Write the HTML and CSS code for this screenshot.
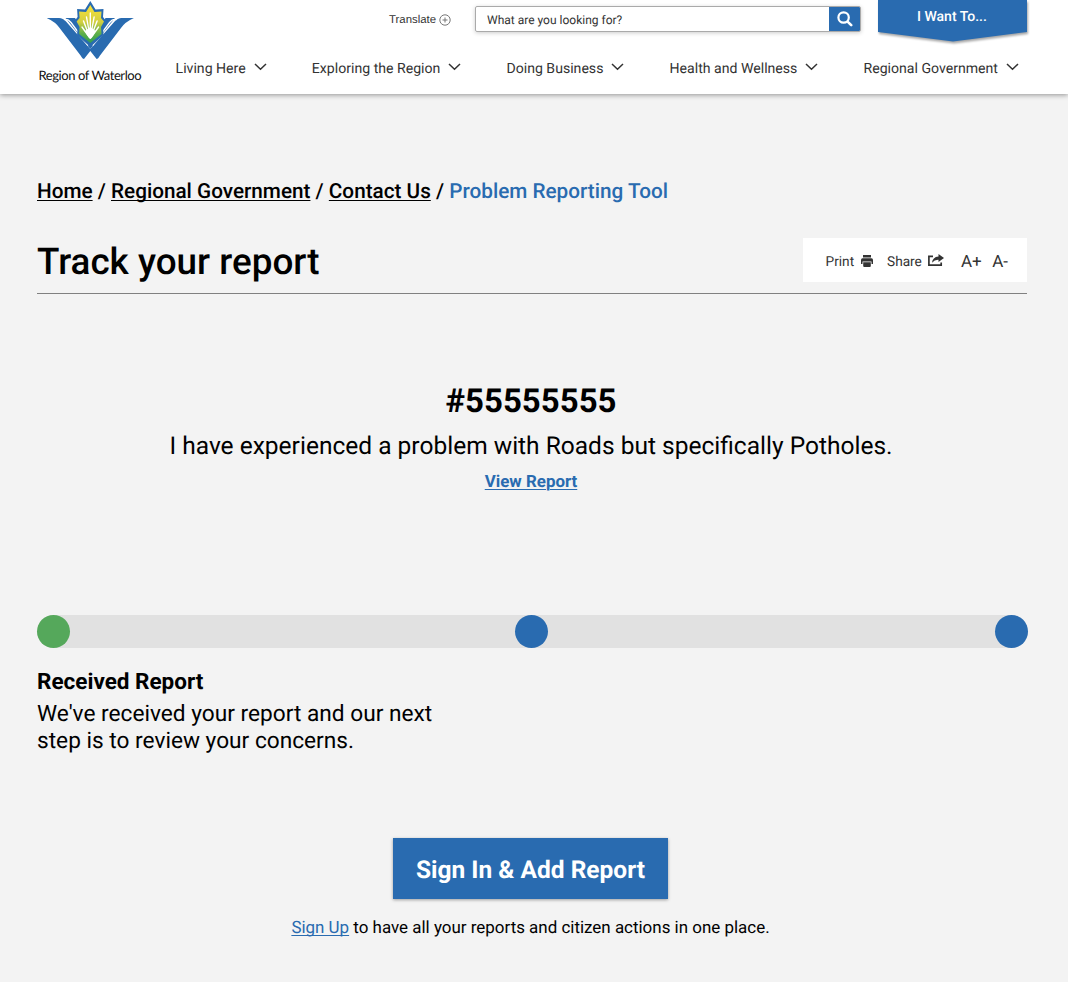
FILE: index.html
```html
<!DOCTYPE html>
<html lang="en">
<head>
<meta charset="utf-8">
<title>Track your report</title>
<link rel="stylesheet" href="styles.css">
</head>
<body>
<header class="header">
  <a class="brand">
    <svg class="logo" width="88" height="60" viewBox="0 0 88 60">
      <defs><linearGradient id="leaf" x1="0" y1="0" x2="0" y2="1"><stop offset="0" stop-color="#f8e03a"/><stop offset=".45" stop-color="#d2cf40"/><stop offset=".75" stop-color="#5eae4a"/><stop offset="1" stop-color="#2f9e4f"/></linearGradient></defs>
      <path fill="#296bb0" d="M.7 17H13Q17 17 20 20.500L44.300 48L68.600 20.500Q71.600 17 75.600 17H87.900Q79 21 75 27L54 54.500Q52 58 50.600 58L44.300 50L38 58Q36.600 58 34.600 54.500L13.600 27Q9.600 21 .7 17Z"/>
      <path fill="#296bb0" d="M19.500 17H29L44.300 38L59.600 17H69L44.300 48Z"/>
      <path fill="none" stroke="#fff" stroke-width="1.300" d="M18 18.500Q22 17.500 25 21.500L42 44.500M70.600 18.500Q66.600 17.500 63.600 21.500L46.600 44.500"/>
      <path fill="#296bb0" d="M44.300 0L49.500 8.500L57.500 8L57 16L60.500 20.500L57 26L57.500 34L44.300 46L31.100 34L31.600 26L28.100 20.500L31.600 16L31.100 8L39 8.500Z"/>
      <path fill="url(#leaf)" d="M44.300 4L48.500 11L55.500 10.500L55 17L58 20.500L55 26L55.500 33L44.300 42L33.100 33L33.600 26L30.600 20.500L33.600 17L33.100 10.500L40 11Z"/>
      <path fill="none" stroke="#fff" stroke-width="1.400" stroke-linecap="round" d="M44.300 37V12M44.300 37L40.500 16M44.300 37L48.100 16M44 37L37.500 20M44.600 37L51.100 20M43.500 36.500L36 26M45.100 36.500L52.600 26"/>
      <path fill="#fff" d="M39 30L44.300 26L49.600 30L47.500 34L44.300 38L41.100 34Z"/>
    </svg>
    <span class="brand-name">Region of Waterloo</span>
  </a>
  <div class="header-main">
    <div class="tools">
      <span class="translate">Translate
        <svg width="12" height="12" viewBox="0 0 12 12" fill="none" stroke="#777"><circle cx="6" cy="6" r="5.200"/><path d="M6 3.500V8.500M3.500 6H8.500"/></svg>
      </span>
      <div class="search">
        <span class="search-text">What are you looking for?</span>
        <span class="search-button"><svg width="16" height="16" viewBox="0 0 16 16" fill="none" stroke="#fff"><circle cx="6.600" cy="6.500" r="5.200" stroke-width="2.200"/><path stroke-width="2.600" stroke-linecap="round" d="M10.800 10.800L14.200 14.200"/></svg></span>
      </div>
      <div class="want">
        <svg class="want-shape" width="154" height="48" viewBox="0 0 154 48"><path fill="#296bb0" d="M0 0H149V32L75 41.500L0 32Z"/></svg>
        <span class="want-text">I Want To...</span>
      </div>
    </div>
    <nav class="nav">
      <span class="nav-item">Living Here<svg class="chev" viewBox="0 0 13 8"><path d="M1 1L6.500 6.300L12 1"/></svg></span>
      <span class="nav-item">Exploring the Region<svg class="chev" viewBox="0 0 13 8"><path d="M1 1L6.500 6.300L12 1"/></svg></span>
      <span class="nav-item">Doing Business<svg class="chev" viewBox="0 0 13 8"><path d="M1 1L6.500 6.300L12 1"/></svg></span>
      <span class="nav-item">Health and Wellness<svg class="chev" viewBox="0 0 13 8"><path d="M1 1L6.500 6.300L12 1"/></svg></span>
      <span class="nav-item">Regional Government<svg class="chev" viewBox="0 0 13 8"><path d="M1 1L6.500 6.300L12 1"/></svg></span>
    </nav>
  </div>
</header>
<main class="page">
  <div class="crumbs"><u>Home</u> / <u>Regional Government</u> / <u>Contact Us</u> / <span class="current">Problem Reporting Tool</span></div>
  <div class="title-row">
    <h1 class="title">Track your report</h1>
    <div class="actions">
      <span class="print">Print</span>
      <svg class="print-icon" width="12" height="12" viewBox="0 0 12 12" fill="#333"><path d="M2 0H10V2.500H2ZM0 5Q0 3.300 1.500 3.300H10.500Q12 3.300 12 5V9H10.500V6.500H1.500V9H0ZM2.200 7.200H9.800V11Q9.800 12 8.800 12H3.200Q2.200 12 2.200 11Z"/></svg>
      <span class="share">Share</span>
      <svg class="share-icon" width="16" height="13" viewBox="0 0 16 13"><path fill="none" stroke="#333" stroke-width="1.700" d="M5 2.300H.9V11.200H13.200V8.500"/><path fill="#333" d="M10.500 0L16 4L10.500 8V5.800Q6.500 5.600 4 8.700Q4.500 3 10.500 2.400Z"/></svg>
      <span class="size">A+</span><span class="size">A-</span>
    </div>
  </div>
  <section class="report">
    <h2 class="number">#55555555</h2>
    <p class="summary">I have experienced a problem with Roads but specifically Potholes.</p>
    <a class="view">View Report</a>
  </section>
  <div class="progress"><span class="dot done"></span><span class="dot"></span><span class="dot"></span></div>
  <section class="status">
    <h3 class="status-title">Received Report</h3>
    <p class="status-text">We've received your report and our next<br>step is to review your concerns.</p>
  </section>
  <section class="signin">
    <a class="button">Sign In &amp; Add Report</a>
    <p class="signup"><a class="link">Sign Up</a> to have all your reports and citizen actions in one place.</p>
  </section>
</main>
</body>
</html>
```
FILE: styles.css
```css
* { box-sizing: border-box; }
body { margin: 0; background: #f3f3f3; color: #000; font-family: Roboto, "Liberation Sans", sans-serif; white-space: nowrap; text-rendering: geometricPrecision; }
h1, h2, h3, p { margin: 0; }
.header { display: flex; height: 94px; background: #fff; box-shadow: 0 1px 5px rgba(0,0,0,.4); color: #333; }
.brand { width: 175px; padding-left: 38px; display: flex; flex-direction: column; }
.logo { margin: 1px 0 0 8px; }
.brand-name { font: 13px/16px Lato, sans-serif; color: #111; letter-spacing: -.42px; margin: 6px 0 0 .5px; }
.header-main { width: 853px; }
.tools { display: flex; height: 48px; }
.translate { width: 300px; padding-left: 214px; display: flex; align-items: center; gap: 3px; height: 38px; padding-top: 1px; font: 11.400px/14px "Liberation Sans", sans-serif; }
.search { display: flex; width: 386px; height: 26px; margin-top: 6px; border: 1px solid #aaa; border-radius: 2px; box-shadow: 0 1px 4px rgba(0,0,0,.2); overflow: hidden; }
.search-text { flex: 1; padding-left: 11px; font: 12px/27px Roboto, sans-serif; }
.search-button { width: 31px; background: #296bb0; display: grid; place-items: center; }
.want { display: grid; width: 150px; margin-left: 17px; }
.want-shape { grid-area: 1/1; filter: drop-shadow(1px 2px 1px rgba(0,0,0,.35)); }
.want-text { grid-area: 1/1; z-index: 1; color: #fff; font-size: 14px; line-height: 35px; font-weight: 500; padding-left: 39px; }
.nav { display: flex; justify-content: space-between; padding: 0 9px 0 .6px; font-size: 14.100px; line-height: 42px; }
.nav-item { display: flex; gap: 8px; }
.chev { width: 13px; height: 8px; margin-top: 15px; fill: none; stroke: #333; stroke-width: 1.500; }
.page { width: 990px; margin-left: 37px; padding-top: 83px; }
.crumbs { font-size: 20.720px; line-height: 30px; font-weight: 500; }
.crumbs u { text-decoration-thickness: 1px; text-underline-offset: 2px; text-decoration-skip-ink: none; }
.current { color: #296bb0; }
.title-row { display: flex; justify-content: space-between; height: 87px; padding-top: 31px; border-bottom: 1px solid #808080; }
.title { font-size: 36.850px; line-height: 48px; font-weight: 500; }
.actions { display: flex; align-items: center; width: 224px; height: 44px; background: #fff; padding: 4px 0 0 22.500px; color: #333; font-size: 13.700px; }
.actions svg { flex: none; margin-bottom: 3px; }
.print { width: 30px; }
.print-icon { margin-left: 5.500px; }
.share { margin-left: 14px; width: 36px; }
.share-icon { margin-left: 5px; }
.size { margin-left: 10.500px; font-size: 17px; line-height: 20px; }
.share-icon + .size { margin-left: 17px; }
.report { display: flex; flex-direction: column; align-items: center; padding: 87px 2px 0 0; }
.number { font-size: 33px; line-height: 42px; }
.summary { font-size: 24.520px; line-height: 30px; margin-top: 8px; }
.view { font-size: 16.900px; line-height: 22px; font-weight: 700; margin-top: 10px; color: #296bb0; text-decoration: underline; text-underline-offset: 2px; text-decoration-thickness: 1px; }
.progress { display: flex; justify-content: space-between; width: 991px; height: 33px; margin-top: 122px; border-radius: 17px; background: #e1e1e1; }
.dot { width: 33px; height: 33px; border-radius: 50%; background: #296bb0; }
.dot:nth-child(2) { margin-right: 2px; }
.done { background: #55a85b; }
.status { padding-top: 21px; }
.status-title { font-size: 22.500px; line-height: 27px; }
.status-text { font-size: 22.680px; line-height: 26.500px; margin-top: 5px; }
.signin { display: flex; flex-direction: column; align-items: center; padding: 84px 3px 0 0; }
.button { width: 275px; height: 61px; background: #296bb0; color: #fff; font-size: 24.500px; font-weight: 700; line-height: 63px; text-align: center; box-shadow: 0 1px 3px rgba(0,0,0,.35); }
.signup { margin: 17px 0 0 0; font-size: 16.950px; line-height: 24px; }
.link { color: #296bb0; text-decoration: underline; text-decoration-thickness: 1px; text-underline-offset: 2px; text-decoration-skip-ink: none; }
```
